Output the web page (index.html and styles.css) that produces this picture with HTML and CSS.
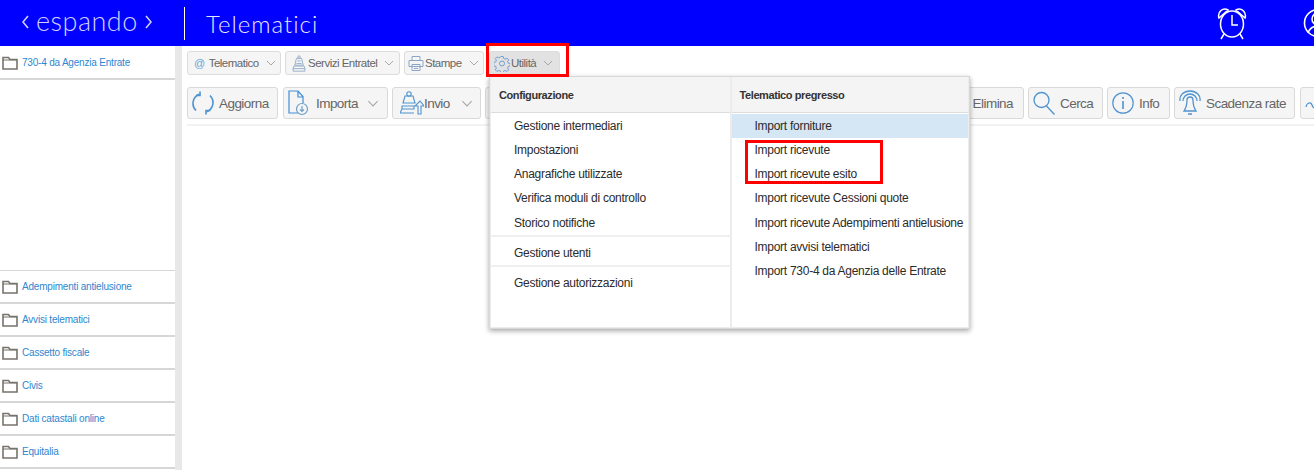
FILE: index.html
```html
<!DOCTYPE html>
<html lang="it">
<head>
<meta charset="utf-8">
<title>Telematici</title>
<link rel="stylesheet" href="styles.css">
</head>
<body>
<svg class="defs" width="0" height="0" aria-hidden="true">
  <symbol id="folder" viewBox="0 0 16 14"><path d="M1 13V1.500h5.500L8 3.500h7V13z" fill="#fff" stroke="#77736c" stroke-width="1.600"/><path d="M1 4h14" stroke="#77736c"/></symbol>
  <symbol id="chev" viewBox="0 0 10 6"><path d="M1 1l4 4 4-4" fill="none" stroke="#a8a8a8" stroke-width="1"/></symbol>
</svg>
<header class="topbar">
  <div class="logo">
    <svg class="logo-chev" viewBox="0 0 7 14" fill="none" stroke="#d0d0ff" stroke-width="1.600"><path d="M6 1L1 7l5 6"/></svg>
    <span>espando</span>
    <svg class="logo-chev" viewBox="0 0 7 14" fill="none" stroke="#d0d0ff" stroke-width="1.600"><path d="M1 1l5 6-5 6"/></svg>
  </div>
  <div class="divider"></div>
  <div class="app-title">Telematici</div>
  <div class="top-icons">
    <svg class="alarm" width="30" height="34" viewBox="0 0 30 34" fill="none" stroke="#fff" stroke-width="1.500">
      <ellipse cx="15" cy="18" rx="11.500" ry="13"/><path d="M15 9v10h6"/><path d="M2 12c-2-6 4-11 9-8zM28 12c2-6-4-11-9-8z"/><path d="M7 28l-3 5M23 28l3 5"/>
    </svg>
    <svg class="user" width="30" height="34" viewBox="0 0 30 34" fill="none" stroke="#fff" stroke-width="1.600">
      <circle cx="15" cy="17" r="13.500"/><circle cx="15" cy="13" r="6"/><path d="M5 27c2-6 6-7 10-7s8 1 10 7"/>
    </svg>
  </div>
</header>
<div class="main">
  <aside class="sidebar">
    <div class="side-item side-first"><svg class="folder"><use href="#folder"/></svg><span>730-4 da Agenzia Entrate</span></div>
    <div class="side-group">
      <div class="side-item"><svg class="folder"><use href="#folder"/></svg><span>Adempimenti antielusione</span></div>
      <div class="side-item"><svg class="folder"><use href="#folder"/></svg><span>Avvisi telematici</span></div>
      <div class="side-item"><svg class="folder"><use href="#folder"/></svg><span>Cassetto fiscale</span></div>
      <div class="side-item"><svg class="folder"><use href="#folder"/></svg><span>Civis</span></div>
      <div class="side-item"><svg class="folder"><use href="#folder"/></svg><span>Dati catastali online</span></div>
      <div class="side-item"><svg class="folder"><use href="#folder"/></svg><span>Equitalia</span></div>
    </div>
  </aside>
  <section class="content">
    <div class="tabs">
      <div class="tab tab-tele"><span class="at">@</span><span>Telematico</span><svg class="chev"><use href="#chev"/></svg></div>
      <div class="tab tab-serv">
        <svg class="ico16" viewBox="0 0 16 20" fill="none" stroke="#8aa6c4"><path d="M5 4h6l2 8H3z"/><path d="M6 7h4M5 10h6"/><path d="M2 13h12l1 3H1zM1 16v3h14v-3"/><circle cx="8" cy="2.500" r="1.500"/></svg>
        <span>Servizi Entratel</span><svg class="chev"><use href="#chev"/></svg></div>
      <div class="tab tab-stam">
        <svg class="ico16 ico-stam" viewBox="0 0 16 16" fill="none" stroke="#8aa6c4"><path d="M4 5V1h8v4M1 5h14v6H1zM4 9h8v6H4zM6 11h4M6 13h4"/></svg>
        <span>Stampe</span><svg class="chev"><use href="#chev"/></svg></div>
      <div class="tab tab-util">
        <svg class="ico16" viewBox="0 0 16 16" fill="none" stroke="#6f9fd6"><circle cx="8" cy="8" r="2.500"/><path d="M6.800 1h2.400l.4 2 1.600.7 1.800-1.100 1.700 1.700-1.100 1.800.7 1.600 2 .4v2.400l-2 .4-.7 1.600 1.100 1.800-1.700 1.700-1.800-1.100-1.600.7-.4 2H6.800l-.4-2-1.600-.7-1.800 1.100-1.700-1.700 1.100-1.800-.7-1.600-2-.4V6.800l2-.4.7-1.600-1.100-1.800 1.700-1.700 1.800 1.100 1.600-.7z"/></svg>
        <span>Utilità</span><svg class="chev"><use href="#chev"/></svg></div>
    </div>
    <div class="tools">
      <div class="btn btn-agg">
        <svg width="22" height="24" viewBox="0 0 22 24" fill="none" stroke="#4f93cf" stroke-width="1.600"><path d="M4 19.500A10 10 0 0 1 7 3.200"/><path d="M18 4.500a10 10 0 0 1-3 16.300"/><path d="M8 .5v4H4"/><path d="M14 23.500v-4h4.500"/></svg>
        <span>Aggiorna</span></div>
      <div class="btn btn-imp">
        <svg width="21" height="26" viewBox="0 0 21 26" fill="none" stroke="#3f8fd6" stroke-width="1.200"><path d="M10 23H1V1h9l5 5.500V13M10 1v6h5"/><circle cx="14" cy="19" r="5.500" stroke="#6f9fc6"/><path d="M14 16v5.500M12 19.500l2 2 2-2" stroke="#6f9fc6"/></svg>
        <span>Importa</span><svg class="chev chev-lg"><use href="#chev"/></svg></div>
      <div class="btn btn-inv">
        <svg width="24" height="24" viewBox="0 0 24 24" fill="none" stroke="#4f93cf" stroke-width="1.100"><circle cx="9" cy="3" r="2.200"/><path d="M5 5h8l2 7H3zM2 15h12v3H2zM2 18l-2 4h14"/><path d="M18 23v-8h-3l5-5 4 5h-3v8z"/></svg>
        <span>Invio</span><svg class="chev chev-lg"><use href="#chev"/></svg></div>
      <div class="btn btn-hidden"><span>Elimina</span></div>
      <div class="btn btn-cerca">
        <svg width="22" height="24" viewBox="0 0 22 24" fill="none" stroke="#4f93cf" stroke-width="1.300"><circle cx="8.500" cy="9" r="7.500"/><path d="M13.500 15l8 8.500"/></svg>
        <span>Cerca</span></div>
      <div class="btn btn-info">
        <svg width="22" height="24" viewBox="0 0 22 24" fill="none" stroke="#4f93cf" stroke-width="1.200"><circle cx="11" cy="12" r="10.200"/><path d="M11 10v8M11 6v2" stroke-width="1.600"/></svg>
        <span>Info</span></div>
      <div class="btn btn-scad">
        <svg width="22" height="26" viewBox="0 0 22 26" fill="none" stroke="#4f93cf" stroke-width="1.300"><path d="M5 21c2-3 3-7 3-11a3 3 0 0 1 6 0c0 4 1 8 3 11zM9 24h4"/><path d="M4 11a7 7 0 0 1 14 0M1 11C0 5 5 1 11 1s11 4 10 10"/></svg>
        <span>Scadenza rate</span></div>
      <div class="btn btn-last">
        <svg class="last-ico" width="10" height="12" viewBox="0 0 10 12" fill="none" stroke="#4f93cf" stroke-width="1.200"><path d="M1 8c1-5 5-5 6-2s2 3 3 2"/></svg>
      </div>
    </div>
  </section>
</div>

<div class="menu">
  <div class="col col-left">
    <div class="col-title">Configurazione</div>
    <ul class="list list-main">
      <li>Gestione intermediari</li>
      <li>Impostazioni</li>
      <li>Anagrafiche utilizzate</li>
      <li>Verifica moduli di controllo</li>
      <li>Storico notifiche</li>
    </ul>
    <ul class="list list-sep"><li>Gestione utenti</li></ul>
    <ul class="list list-sep"><li>Gestione autorizzazioni</li></ul>
  </div>
  <div class="col col-right">
    <div class="col-title">Telematico pregresso</div>
    <ul class="list list-main">
      <li class="active">Import forniture</li>
      <li>Import ricevute</li>
      <li>Import ricevute esito</li>
      <li>Import ricevute Cessioni quote</li>
      <li>Import ricevute Adempimenti antielusione</li>
      <li>Import avvisi telematici</li>
      <li>Import 730-4 da Agenzia delle Entrate</li>
    </ul>
  </div>
</div>
<div class="mark mark-util"></div>
<div class="mark mark-ric"></div>
</body>
</html>
```

FILE: styles.css
```css
* { box-sizing: border-box; }
html, body { margin: 0; height: 470px; overflow: hidden; }
body { background: #fff; font-family: "Liberation Sans", Arial, sans-serif; color: #333; position: relative; }
.defs { position: absolute; }

.topbar { height: 46px; background: #0000ff; color: #fff; display: flex; align-items: center; position: relative; }
.logo { width: 184px; padding-left: 22px; display: flex; align-items: center; gap: 7px; font-family: Lato, sans-serif; font-weight: 300; font-size: 27px; color: #d0d0ff; white-space: nowrap; padding-bottom: 2px; }
.logo span { letter-spacing: .5px; margin-top: -3px; }
.logo-chev { width: 7px; height: 14px; flex: none; }
.divider { width: 1px; height: 33px; background: #fff; }
.app-title { margin-left: 21px; font-family: Lato, sans-serif; font-weight: 300; font-size: 24px; letter-spacing: 1px; color: #e6e6ff; }
.top-icons { margin-left: auto; display: flex; gap: 56px; width: 97px; flex: none; height: 46px; align-items: center; }
.top-icons svg { flex: none; }

.main { display: flex; height: 424px; }
.sidebar { width: 182px; flex: none; border-right: 7px solid #e8e8e8; display: flex; flex-direction: column; }
.side-item { height: 33px; border-bottom: 2px solid #d6d6d6; display: flex; align-items: flex-start; padding: 9px 0 0 2px; font-size: 10px; color: #2f86cf; letter-spacing: -.02em; }
.side-item span { margin: 1px 0 0 4px; line-height: 12px; }
.side-first { height: 34px; padding-top: 10px; }
.folder { width: 16px; height: 14px; flex: none; }
.side-group { margin-top: 190px; border-top: 1px solid #d6d6d6; }

.content { flex: 1; min-width: 0; padding: 5px 0 0 5px; overflow: hidden; }
.tabs { display: flex; gap: 4px; height: 24px; }
.tab { height: 24px; border: 1px solid #dcdcdc; border-radius: 3px; background: #f5f5f5; display: flex; align-items: center; font-size: 11.5px; letter-spacing: -.5px; color: #666; padding-left: 5px; flex: none; white-space: nowrap; }
.tab-tele { width: 94px; }
.tab-serv { width: 115px; }
.tab-stam { width: 80px; padding-left: 3px; }
.tab-util { width: 71px; margin-left: 1px; padding-left: 4px; background: #e2e2e2; }
.at { color: #6f9fd6; margin: 0 4px 0 1px; font-size: 11px; }
.ico16 { width: 16px; height: 17px; margin-right: 1px; flex: none; }
.chev { width: 10px; height: 6px; margin-left: 7px; flex: none; }
.chev-lg { width: 12px; height: 7px; margin-left: 10px; }

.tools { display: flex; gap: 4px; margin-top: 12px; height: 39px; padding-bottom: 6px; border-bottom: 2px solid #f2f2f2; }
.btn { height: 32px; border: 1px solid #d9d9d9; border-radius: 3px; background: #f5f5f5; display: flex; align-items: center; font-size: 13.5px; letter-spacing: -.55px; color: #666; padding-left: 4px; flex: none; white-space: nowrap; }
.btn-agg { width: 91px; gap: 5px; }
.btn-imp { width: 105px; margin-left: 1px; gap: 7px; padding-left: 4px; }
.btn-imp .chev-lg { margin-left: 2px; }
.btn-inv { width: 89px; padding-left: 7px; }
.btn-inv .chev-lg { margin-left: 11px; }
.btn-hidden { width: 539px; justify-content: flex-end; padding-right: 10px; }
.btn-cerca { width: 75px; gap: 5px; }
.btn-info { width: 63px; gap: 5px; }
.btn-scad { width: 121px; gap: 5px; }
.btn-last { width: 40px; margin-left: 1px; }
.last-ico { margin-top: 4px; }

.menu { position: absolute; left: 489px; top: 76px; width: 481px; height: 253px; background: #ececec; border: 1px solid #d8d8d8; box-shadow: 0 2px 5px rgba(0,0,0,.35); display: flex; gap: 2px; padding: 0 1px 1px 1px; }
.col { background: #fff; display: flex; flex-direction: column; }
.col-left { width: 239px; }
.col-right { width: 237px; }
.col-title { height: 36px; background: #f4f4f4; border-bottom: 1px solid #dcdcdc; font-size: 11px; font-weight: bold; color: #333; padding: 12px 0 0 8px; line-height: 13px; letter-spacing: -.4px; white-space: nowrap; }
.list { list-style: none; margin: 0; padding: 0; font-size: 12px; color: #2b2b2b; }
.list li { height: 24.3px; line-height: 24px; padding-left: 23px; white-space: nowrap; letter-spacing: -.27px; }
.list li.active { background: #d5e6f4; }
.list-main { padding-top: .5px; }
.list-sep { border-top: 2px solid #efefef; padding: 4px 0 0; height: 30px; }

.mark { position: absolute; border: 3px solid #f00; }
.mark-util { left: 486px; top: 43px; width: 83px; height: 34px; }
.mark-ric { left: 745px; top: 140px; width: 138px; height: 44px; }
```
